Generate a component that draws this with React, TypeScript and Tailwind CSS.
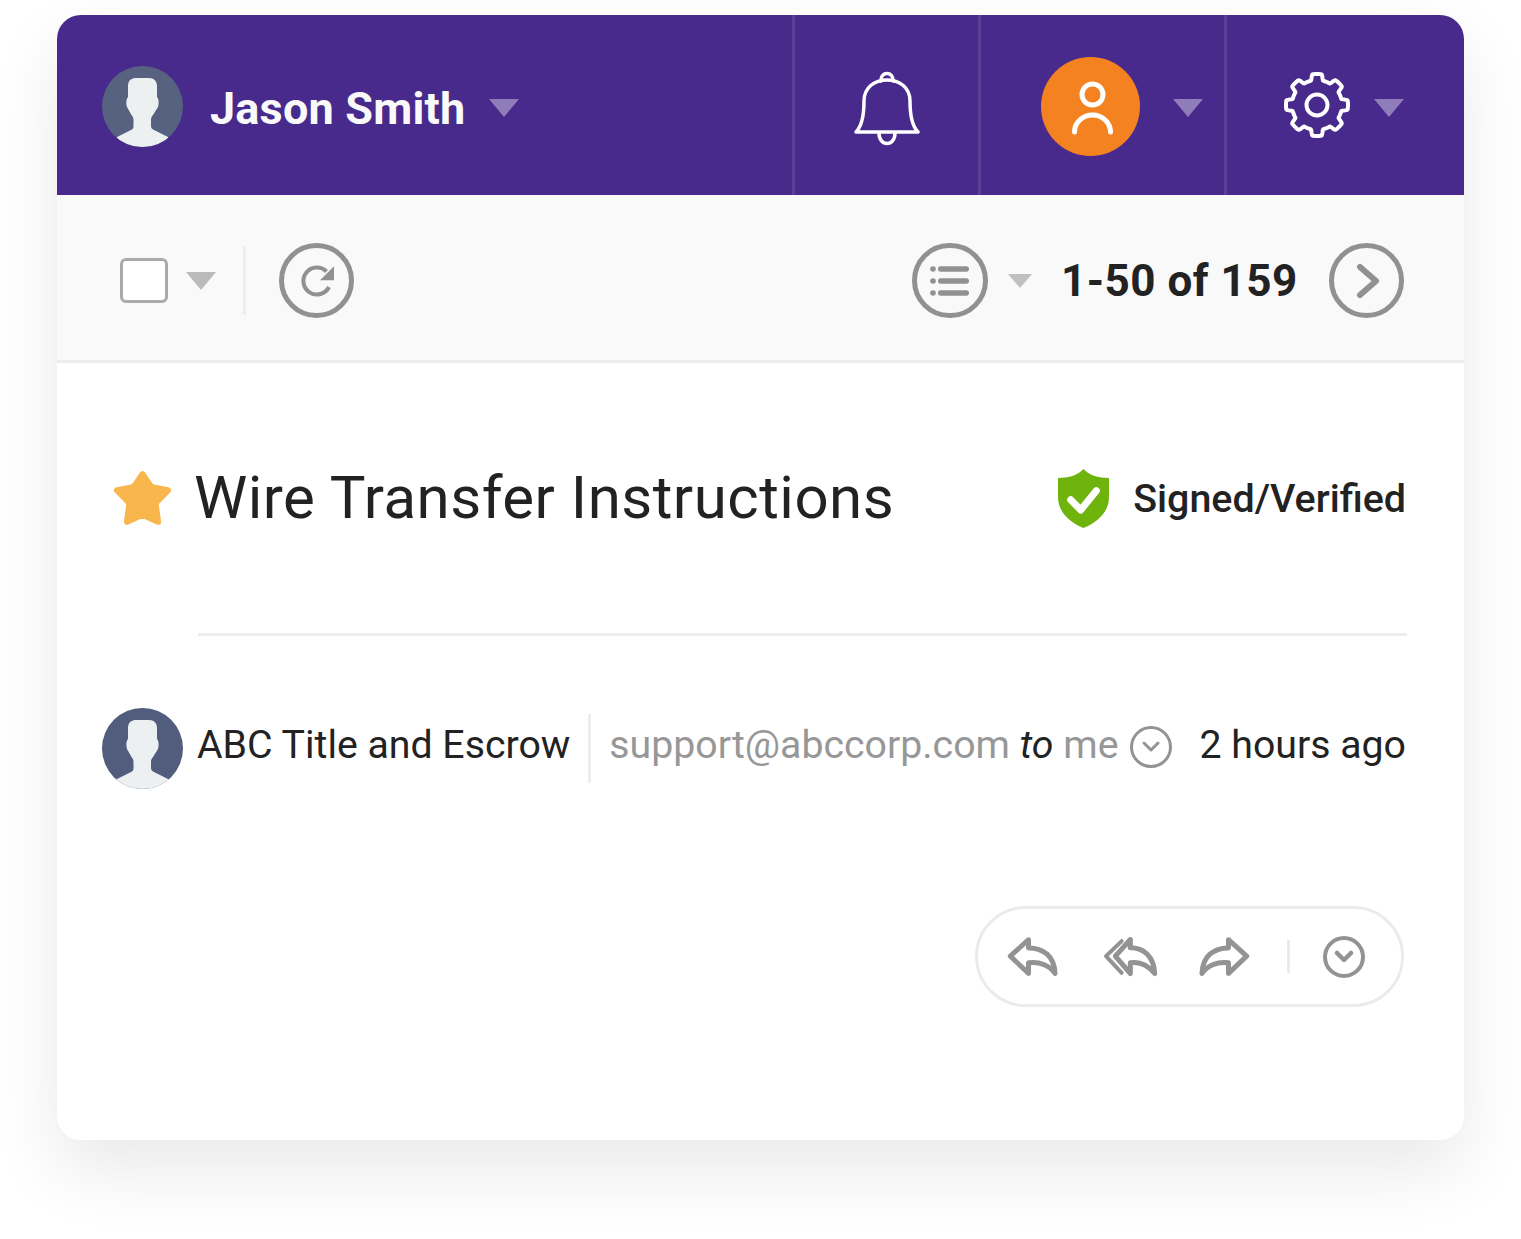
const font = "font-['Roboto',sans-serif]";

function gearPath() {
  const cx = 33, cy = 33;
  const pts: string[] = [];
  for (let i = 0; i < 360; i++) {
    const t = (i * Math.PI) / 180;
    const c = Math.cos(8 * t);
    const s = Math.max(0, Math.min(1, (c + 0.45) / 0.9));
    const k = s * s * (3 - 2 * s);
    const r = 25 + 6 * k;
    const x = cx + r * Math.sin(t);
    const y = cy - r * Math.cos(t);
    pts.push(`${x.toFixed(2)} ${y.toFixed(2)}`);
  }
  return `M${pts.join("L")}Z`;
}

function Tri({ color = "purple" }: { color?: "purple" | "gray" | "small" }) {
  if (color === "purple")
    return <div className="w-0 h-0 border-x-[15px] border-t-[18px] border-x-transparent border-t-[#8f7db9]" />;
  if (color === "gray")
    return <div className="w-0 h-0 border-x-[15px] border-t-[18px] border-x-transparent border-t-[#bbbbbb]" />;
  return <div className="w-0 h-0 border-x-[12px] border-t-[14px] border-x-transparent border-t-[#c0c0c0]" />;
}

function Avatar({ bg }: { bg: string }) {
  return (
    <div className={`w-[81px] h-[81px] rounded-full overflow-hidden shrink-0 ${bg}`}>
      <svg width="81" height="81" viewBox="0 0 81 81">
        <path
          fill="#ecf0f1"
          d="M26 20C26 14 30 12 34 12H47C52 12 55 15 55 20V31C57 33 57 38 56 41L51 49C49.5 51 49 52 49 54V60C49 62 50 63 52 64L66 71V81H15V71L29 64C31 63 31.5 62 31.5 60V54C31.5 52 31 51 29.5 49L25 41C24 38 24 33 26 31Z"
        />
      </svg>
    </div>
  );
}

const replyPath = "M205 135L150 185L205 237V205C240 200 270 215 285 237C283 185 250 160 205 160Z";

function Reply({ flip }: { flip?: boolean }) {
  return (
    <svg width="53" height="42" viewBox="140 125 160 125" className={flip ? "-scale-x-100" : ""}>
      <path d={replyPath} fill="none" stroke="#939393" strokeWidth="15" strokeLinejoin="round" strokeLinecap="round" />
    </svg>
  );
}

function ReplyAll() {
  return (
    <svg width="58" height="42" viewBox="425 125 174 125">
      <path d="M510 135L465 185L510 237V205C540 200 565 215 583 237C581 185 550 160 510 160Z" fill="none" stroke="#939393" strokeWidth="15" strokeLinejoin="round" strokeLinecap="round" />
      <path d="M484 140L437 185L484 235" fill="none" stroke="#939393" strokeWidth="12" strokeLinejoin="round" strokeLinecap="round" />
    </svg>
  );
}

function ChevronCircle({ thick }: { thick?: boolean }) {
  return (
    <div className={`w-[42px] h-[42px] rounded-full border-[#939393] flex items-center justify-center shrink-0 ${thick ? "border-[4.5px]" : "border-[3px]"}`}>
      <svg width="22" height="14" viewBox="0 0 22 14">
        <path d="M4 3L11 10L18 3" fill="none" stroke="#939393" strokeWidth={thick ? 4.5 : 3} strokeLinecap="round" strokeLinejoin="round" />
      </svg>
    </div>
  );
}

export default function App() {
  return (
    <div className={`w-[1521px] h-[1239px] bg-white pt-[15px] pl-[57px] overflow-hidden ${font}`}>
      <div className="w-[1407px] h-[1125px] bg-white rounded-[24px] overflow-hidden flex flex-col shadow-[0_30px_70px_rgba(0,0,0,0.09)] relative">
        {/* Header */}
        <header className="h-[180px] bg-[#482a8c] flex shrink-0">
          <div className="w-[735px] flex items-center pl-[45px]">
            <div className="mt-[2px]"><Avatar bg="bg-[#56627f]" /></div>
            <span className="ml-[27px] mt-[6px] text-[45px] font-bold text-[#f9f9f9] leading-none tracking-[0.2px] whitespace-nowrap">Jason Smith</span>
            <div className="ml-[24px] mt-[6px]"><Tri /></div>
          </div>
          <div className="w-[186px] border-l-[3px] border-[#5a3f98] flex items-center justify-center">
            <svg width="66" height="76" viewBox="0 0 66 76" className="mt-[6px]">
              <g fill="none" stroke="#ffffff" strokeWidth="3.5" strokeLinecap="round" strokeLinejoin="round">
                <path d="M2 62C8 56 10 46 10 31C10 17 21 10 33 10C45 10 56 17 56 31C56 46 58 56 64 62Z" />
                <path d="M27 11C26 1 40 1 39 11" />
                <path d="M25 63C25 77 41 77 41 63" />
              </g>
            </svg>
          </div>
          <div className="w-[246px] border-l-[3px] border-[#5a3f98] flex items-center pl-[60px]">
            <div className="w-[99px] h-[99px] rounded-full bg-[#f58220] flex items-center justify-center mt-[3px] shrink-0">
              <svg width="60" height="70" viewBox="0 0 60 70">
                <g fill="none" stroke="#ffffff" strokeWidth="5" strokeLinecap="round">
                  <circle cx="31.5" cy="22.5" r="10.5" />
                  <path d="M13.5 60A18 17 0 0 1 49.5 60" />
                </g>
              </svg>
            </div>
            <div className="ml-[33px] mt-[6px]"><Tri /></div>
          </div>
          <div className="flex-1 border-l-[3px] border-[#5a3f98] flex items-center pl-[57px]">
            <svg width="66" height="66" viewBox="0 0 66 66" className="shrink-0 mb-[1px]">
              <path d={gearPath()} fill="none" stroke="#ffffff" strokeWidth="4" strokeLinejoin="round" />
              <circle cx="33" cy="33" r="10.5" fill="none" stroke="#ffffff" strokeWidth="4" />
            </svg>
            <div className="ml-[24px] mt-[6px]"><Tri /></div>
          </div>
        </header>

        {/* Toolbar */}
        <div className="h-[168px] bg-[#f9f9f9] border-b-[3px] border-[#ededed] flex items-center shrink-0 pl-[63px] pr-[60px] pt-[6px]">
          <div className="w-[48px] h-[45px] bg-white border-[3px] border-[#aaaaaa] rounded-[6px]" />
          <div className="ml-[18px]"><Tri color="gray" /></div>
          <div className="ml-[27px] w-[3px] h-[69px] bg-[#ededed]" />
          <div className="ml-[33px] w-[75px] h-[75px] rounded-full border-[5.5px] border-[#919191] flex items-center justify-center">
            <svg width="36" height="36" viewBox="0 0 36 36">
              <path d="M27.5 8.5A13.5 13.5 0 1 0 30 24" fill="none" stroke="#919191" strokeWidth="4" />
              <path d="M35 3.3V17.3H21Z" fill="#919191" />
            </svg>
          </div>
          <div className="ml-auto w-[76px] h-[75px] rounded-full border-[5.5px] border-[#919191] flex items-center justify-center">
            <svg width="44" height="32" viewBox="0 0 44 32" className="ml-[3px]">
              <g fill="#919191">
                <circle cx="3" cy="4" r="2.8" />
                <circle cx="3" cy="16" r="2.8" />
                <circle cx="3" cy="28" r="2.8" />
                <rect x="8" y="1.3" width="31" height="5.4" rx="2.7" />
                <rect x="8" y="13.3" width="31" height="5.4" rx="2.7" />
                <rect x="8" y="25.3" width="31" height="5.4" rx="2.7" />
              </g>
            </svg>
          </div>
          <div className="ml-[20px]"><Tri color="small" /></div>
          <span className="ml-[29px] text-[44px] font-bold text-[#222222] leading-none tracking-[0.5px] w-[233px] whitespace-nowrap">1-50 of 159</span>
          <div className="ml-[35px] w-[75px] h-[75px] rounded-full border-[5.5px] border-[#919191] flex items-center justify-center">
            <svg width="30" height="36" viewBox="0 0 30 36">
              <path d="M8 4L24 18L8 32" fill="none" stroke="#919191" strokeWidth="6" strokeLinecap="round" strokeLinejoin="round" />
            </svg>
          </div>
        </div>

        {/* Title row */}
        <div className="h-[270px] flex items-center pl-[56px] pr-[58px] shrink-0">
          <svg width="59" height="56" viewBox="0 0 57 54" className="shrink-0">
            <path
              d="M28.5 4L37 16.5L53 19.5L41 32L43.5 50L28.5 43L13.5 50L16 32L4 19.5L20 16.5Z"
              fill="#f8b64c"
              stroke="#f8b64c"
              strokeWidth="6"
              strokeLinejoin="round"
            />
          </svg>
          <h1 className="ml-[22px] text-[60px] font-normal text-[#222222] leading-none tracking-[0.5px] whitespace-nowrap">Wire Transfer Instructions</h1>
          <svg width="51" height="59" viewBox="0 0 51 59" className="ml-auto shrink-0">
            <path d="M25.5 0C30 5 38 9 51 9V28C51 44 38 54 25.5 59C13 54 0 44 0 28V9C13 9 21 5 25.5 0Z" fill="#6fb30d" />
            <path d="M12.7 30.7L22.7 41L38.3 21.7" fill="none" stroke="#ffffff" strokeWidth="7" strokeLinecap="round" strokeLinejoin="round" />
          </svg>
          <span className="ml-[24px] mt-[2px] text-[39.4px] font-medium text-[#222222] leading-none whitespace-nowrap">Signed/Verified</span>
        </div>

        {/* Separator */}
        <div className="h-[3px] ml-[141px] mr-[57px] bg-[#ededed] shrink-0" />

        {/* Sender */}
        <div className="mt-[72px] pl-[45px] pr-[58px] flex items-center h-[81px] text-[39.25px] leading-none shrink-0">
          <Avatar bg="bg-[#525c7d]" />
          <span className="ml-[14px] mb-[6px] text-[#222222] whitespace-nowrap">ABC Title and Escrow</span>
          <div className="ml-auto w-[3px] h-[69px] bg-[#ededed] shrink-0" />
          <span className="ml-[18px] mb-[6px] text-[#979797] whitespace-nowrap">
            support@abccorp.com <em className="text-[#222222]">to</em> me
          </span>
          <div className="ml-[12px] mb-[3px]"><ChevronCircle /></div>
          <span className="ml-[27px] mb-[6px] text-[#222222] whitespace-nowrap">2 hours ago</span>
        </div>

        {/* Actions */}
        <div className="mt-[117px] ml-auto mr-[60px] w-[429px] h-[101px] rounded-full border-[3px] border-[#ebebeb] flex items-center pl-[29px] shrink-0">
          <Reply />
          <div className="ml-[42px]"><ReplyAll /></div>
          <div className="ml-[37px]"><Reply flip /></div>
          <div className="ml-[37px] w-[3px] h-[33px] bg-[#ebebeb]" />
          <div className="ml-[33px]"><ChevronCircle thick /></div>
        </div>
      </div>
    </div>
  );
}
